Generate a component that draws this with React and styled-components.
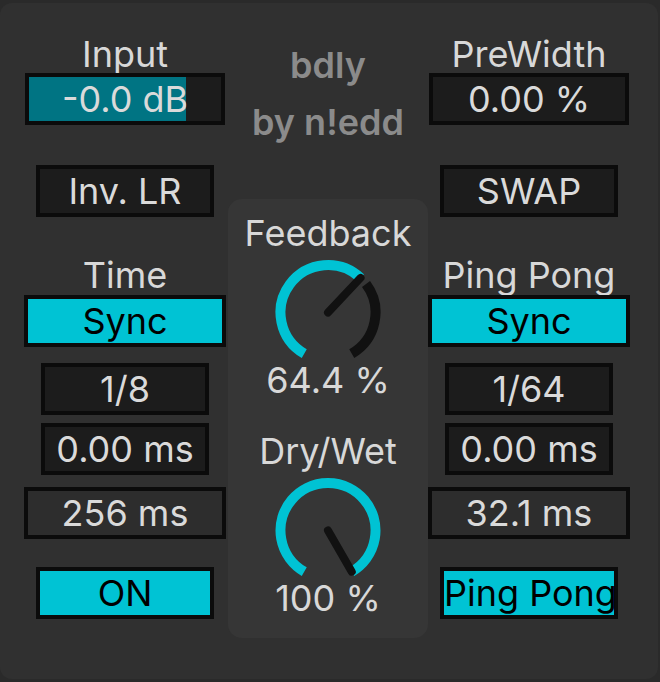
import React from "react";
import styled, { createGlobalStyle } from "styled-components";

const Global = createGlobalStyle`
  body {
    margin: 0;
    background: #2a2a2a;
    font-family: "Inter", "Noto Sans", sans-serif;
  }
`;

const Device = styled.div`
  margin-top: 3px;
  width: 658px;
  height: 676px;
  box-sizing: border-box;
  background: #303030;
  border-radius: 12px;
  display: flex;
  padding: 0 0 0 24px;
`;

const Side = styled.div`
  width: 202px;
  display: flex;
  flex-direction: column;
  align-items: center;
  padding-top: 33px;
`;

const Label = styled.div`
  font-size: 36px;
  line-height: 36px;
  color: #d8d8d8;
  margin-top: ${(p) => p.$top || 0}px;
  white-space: nowrap;
`;

const Box = styled.div`
  box-sizing: border-box;
  width: ${(p) => p.$w}px;
  height: 52px;
  margin-top: ${(p) => p.$top || 0}px;
  border: 4px solid #0b0b0b;
  background: ${(p) => p.$bg || "#1c1c1c"};
  color: #dadada;
  font-size: 36px;
  line-height: 44px;
  text-align: center;
  white-space: nowrap;
  overflow: visible;
`;

const Meter = styled(Box)`
  background: linear-gradient(
    90deg,
    #007483 ${(p) => p.$level}%,
    #1c1c1c ${(p) => p.$level}%
  );
`;

const Toggle = styled(Box)`
  background: #00c3d4;
  color: #000;
`;

const Middle = styled.div`
  width: 200px;
  margin-left: 2px;
  display: flex;
  flex-direction: column;
  align-items: center;
  padding-top: 44px;
`;

const Title = styled.div`
  font-weight: 600;
  font-size: 36px;
  line-height: 36px;
  color: #8b8b8b;
  margin-top: ${(p) => p.$top || 0}px;
`;

const KnobPanel = styled.div`
  margin-top: 59px;
  width: 200px;
  box-sizing: border-box;
  background: #363636;
  border-radius: 14px;
  padding: 16px 0 22px;
  display: flex;
  flex-direction: column;
  align-items: center;
`;

const KnobSvg = styled.svg`
  display: block;
  margin-top: 6px;
`;

const CX = 55;
const CY = 55.5;
const R = 47.5;

function pt(a, r) {
  const t = (a * Math.PI) / 180;
  return [CX + r * Math.sin(t), CY - r * Math.cos(t)];
}

function arc(a0, a1) {
  const [x0, y0] = pt(a0, R);
  const [x1, y1] = pt(a1, R);
  const large = a1 - a0 > 180 ? 1 : 0;
  return `M ${x0} ${y0} A ${R} ${R} 0 ${large} 1 ${x1} ${y1}`;
}

function Knob({ value }) {
  const a = -150 + value * 300;
  const [nx, ny] = pt(a, R);
  return (
    <KnobSvg width="110" height="105" viewBox="0 0 110 105">
      <path d={arc(-150, a)} fill="none" stroke="#00c3d4" strokeWidth="10" />
      {a + 10 < 150 && (
        <path d={arc(a + 10, 150)} fill="none" stroke="#111" strokeWidth="10" />
      )}
      <line
        x1={CX}
        y1={CY}
        x2={nx}
        y2={ny}
        stroke="#111"
        strokeWidth="8"
        strokeLinecap="round"
      />
    </KnobSvg>
  );
}

export default function App() {
  return (
    <>
      <Global />
      <Device>
        <Side>
          <Label>Input</Label>
          <Meter $w={200} $top={1} $level={82}>
            -0.0 dB
          </Meter>
          <Box $w={178} $top={40}>
            Inv. LR
          </Box>
          <Label $top={40}>Time</Label>
          <Toggle $w={202} $top={2}>
            Sync
          </Toggle>
          <Box $w={168} $top={16}>
            1/8
          </Box>
          <Box $w={168} $top={8}>
            0.00 ms
          </Box>
          <Box $w={202} $top={12} $bg="#2d2d2d">
            256 ms
          </Box>
          <Toggle $w={178} $top={28}>
            ON
          </Toggle>
        </Side>

        <Middle>
          <Title>bdly</Title>
          <Title $top={21}>by n!edd</Title>
          <KnobPanel>
            <Label>Feedback</Label>
            <Knob value={0.644} />
            <Label>64.4 %</Label>
            <Label $top={35}>Dry/Wet</Label>
            <Knob value={1} />
            <Label>100 %</Label>
          </KnobPanel>
        </Middle>

        <Side>
          <Label>PreWidth</Label>
          <Box $w={200} $top={1}>
            0.00 %
          </Box>
          <Box $w={178} $top={40}>
            SWAP
          </Box>
          <Label $top={40}>Ping Pong</Label>
          <Toggle $w={202} $top={2}>
            Sync
          </Toggle>
          <Box $w={168} $top={16}>
            1/64
          </Box>
          <Box $w={168} $top={8}>
            0.00 ms
          </Box>
          <Box $w={202} $top={12} $bg="#2d2d2d">
            32.1 ms
          </Box>
          <Toggle $w={178} $top={28}>
            Ping Pong
          </Toggle>
        </Side>
      </Device>
    </>
  );
}
